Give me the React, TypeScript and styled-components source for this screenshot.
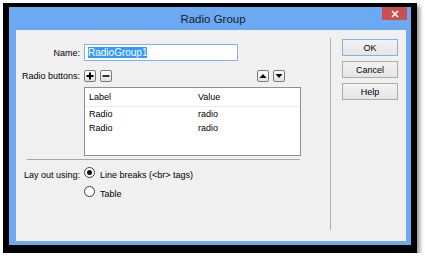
import React from 'react'
import styled, { createGlobalStyle } from 'styled-components'

const GlobalStyle = createGlobalStyle`
  body {
    margin: 0;
    background: #fff;
    font-family: 'Liberation Sans', Arial, sans-serif;
    color: #000;
  }
`

const Frame = styled.div`
  margin: 3px 0 0 3px;
  width: 414px;
  height: 250px;
  box-sizing: border-box;
  border-style: solid;
  border-color: #000;
  border-width: 4px 6px 8px 6px;
  background: #000;
  box-shadow: 3px 3px 4px rgba(0, 0, 0, 0.4);
`
const Window = styled.div`
  height: 100%;
  box-sizing: border-box;
  display: flex;
  flex-direction: column;
  background: #6ba9f3;
  padding: 0 5px 4px 7px;
`
const TitleBar = styled.div`
  height: 23px;
  flex: 0 0 auto;
  display: grid;
  grid-template-columns: 1fr auto 1fr;
  margin-right: -1px;
`
const Title = styled.div`
  grid-column: 2;
  align-self: center;
  font-size: 11.5px;
  color: #1b1b1b;
  padding-left: 3px;
`
const Close = styled.div`
  grid-column: 3;
  justify-self: end;
  width: 25px;
  height: 13px;
  background: #c9504f;
  display: flex;
  align-items: center;
  justify-content: center;
`
const Content = styled.div`
  flex: 1;
  display: flex;
  background: #f0f0f0;
`
const Main = styled.div`
  width: 314px;
  padding-top: 14px;
  display: grid;
  grid-template-columns: 64px auto;
  column-gap: 4px;
  align-content: start;
  align-items: center;
`
const Label = styled.div<{ $top?: number }>`
  text-align: right;
  font-size: 9px;
  white-space: nowrap;
  margin-top: ${(p) => p.$top ?? 0}px;
  align-self: ${(p) => (p.$top ? 'start' : 'center')};
`
const NameInput = styled.div`
  width: 154px;
  height: 17px;
  box-sizing: border-box;
  border: 1px solid #7eb4ea;
  background: #fff;
  padding: 0 3px;
  display: flex;
  align-items: center;
  font-size: 10px;
`
const Selected = styled.span`
  background: #3399ff;
  color: #fff;
  line-height: 11px;
`
const Toolbar = styled.div`
  width: 201px;
  margin-top: 9px;
  display: flex;
  justify-content: space-between;
`
const ToolGroup = styled.div`
  display: flex;
  gap: 4px;
`
const ToolButton = styled.div`
  width: 12px;
  height: 12px;
  box-sizing: border-box;
  border: 1px solid #7a7a7a;
  border-radius: 2px;
  background: linear-gradient(#fdfdfd, #e2e2e2);
  display: flex;
  align-items: center;
  justify-content: center;
`
const ListBox = styled.div`
  grid-column: 2;
  margin-top: 5px;
  width: 217px;
  height: 69px;
  box-sizing: border-box;
  border: 1px solid #8f8f8f;
  background: #fff;
  font-size: 9px;
`
const ListRow = styled.div<{ $header?: boolean }>`
  display: grid;
  grid-template-columns: 108px 1fr;
  height: ${(p) => (p.$header ? 18 : 14)}px;
  align-items: center;
  border-bottom: ${(p) => (p.$header ? '1px solid #ededed' : 'none')};
`
const Cell = styled.div<{ $header?: boolean }>`
  height: 100%;
  display: flex;
  align-items: center;
  padding-left: 4px;
  & + & {
    border-left: ${(p) => (p.$header ? '1px solid #e6e6e6' : '1px solid transparent')};
  }
`
const HSep = styled.div`
  grid-column: 1 / -1;
  margin: 3px 0 0 11px;
  width: 273px;
  height: 1px;
  background: #a7a7a7;
`
const Options = styled.div`
  display: flex;
  flex-direction: column;
  gap: 6px;
  margin-top: 7px;
`
const Option = styled.div`
  display: flex;
  align-items: flex-start;
  gap: 5px;
  font-size: 9px;
  height: 13px;
`
const OptionText = styled.span`
  margin-top: 3px;
`
const Radio = styled.div<{ $checked?: boolean }>`
  width: 11px;
  height: 11px;
  box-sizing: border-box;
  border-radius: 50%;
  border: 1px solid #3a3a3a;
  background: #fff;
  display: flex;
  align-items: center;
  justify-content: center;
  &::after {
    content: '';
    width: 5px;
    height: 5px;
    border-radius: 50%;
    background: ${(p) => (p.$checked ? '#111' : 'transparent')};
  }
`
const VSep = styled.div`
  width: 1px;
  background: #b0b0b0;
  margin: 8px 0 11px;
`
const Side = styled.div`
  padding: 9px 0 0 11px;
  display: flex;
  flex-direction: column;
  gap: 5px;
`
const Button = styled.div<{ $default?: boolean }>`
  width: 56px;
  height: 17px;
  box-sizing: border-box;
  border: 1px solid ${(p) => (p.$default ? '#7eb4ea' : '#acacac')};
  background: linear-gradient(#f3f3f3, #e5e5e5);
  font-size: 9px;
  display: flex;
  align-items: center;
  justify-content: center;
`

const PlusIcon = () => (
  <svg width='8' height='8' viewBox='0 0 8 8'>
    <path d='M4 0.5v7M0.5 4h7' stroke='#000' strokeWidth='2' />
  </svg>
)
const MinusIcon = () => (
  <svg width='8' height='8' viewBox='0 0 8 8'>
    <path d='M0.5 4h7' stroke='#000' strokeWidth='1.6' />
  </svg>
)
const UpIcon = () => (
  <svg width='8' height='6' viewBox='0 0 8 6'>
    <polygon points='4,1 7.5,5 0.5,5' fill='#000' />
  </svg>
)
const DownIcon = () => (
  <svg width='8' height='6' viewBox='0 0 8 6'>
    <polygon points='0.5,1 7.5,1 4,5' fill='#000' />
  </svg>
)
const CloseIcon = () => (
  <svg width='8' height='8' viewBox='0 0 8 8'>
    <path d='M1 1l6 6M7 1l-6 6' stroke='#fff' strokeWidth='1.6' />
  </svg>
)

const ROWS = [
  { label: 'Radio', value: 'radio' },
  { label: 'Radio', value: 'radio' },
]

const App = () => (
  <>
    <GlobalStyle />
    <Frame>
      <Window>
        <TitleBar>
          <Title>Radio Group</Title>
          <Close>
            <CloseIcon />
          </Close>
        </TitleBar>
        <Content>
          <Main>
            <Label>Name:</Label>
            <NameInput>
              <Selected>RadioGroup1</Selected>
            </NameInput>

            <Label $top={10}>Radio buttons:</Label>
            <Toolbar>
              <ToolGroup>
                <ToolButton>
                  <PlusIcon />
                </ToolButton>
                <ToolButton>
                  <MinusIcon />
                </ToolButton>
              </ToolGroup>
              <ToolGroup>
                <ToolButton>
                  <UpIcon />
                </ToolButton>
                <ToolButton>
                  <DownIcon />
                </ToolButton>
              </ToolGroup>
            </Toolbar>

            <ListBox>
              <ListRow $header>
                <Cell $header>Label</Cell>
                <Cell $header>Value</Cell>
              </ListRow>
              {ROWS.map((row, i) => (
                <ListRow key={i}>
                  <Cell>{row.label}</Cell>
                  <Cell>{row.value}</Cell>
                </ListRow>
              ))}
            </ListBox>

            <HSep />

            <Label $top={10}>Lay out using:</Label>
            <Options>
              <Option>
                <Radio $checked />
                <OptionText>Line breaks (&lt;br&gt; tags)</OptionText>
              </Option>
              <Option>
                <Radio />
                <OptionText>Table</OptionText>
              </Option>
            </Options>
          </Main>
          <VSep />
          <Side>
            <Button $default>OK</Button>
            <Button>Cancel</Button>
            <Button>Help</Button>
          </Side>
        </Content>
      </Window>
    </Frame>
  </>
)

export default App
